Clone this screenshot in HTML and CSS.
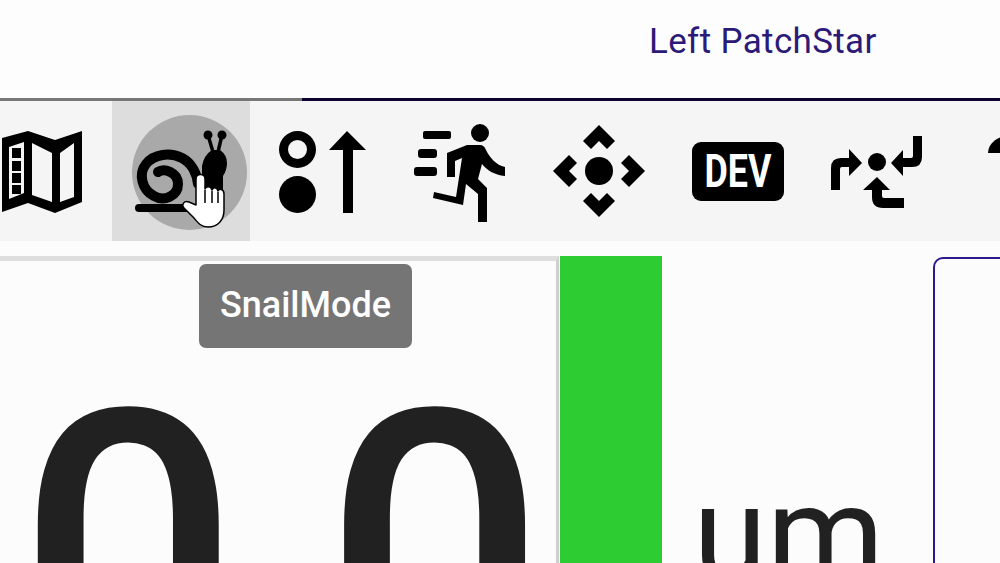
FILE: index.html
```html
<!DOCTYPE html>
<html lang="en">
<head>
    <meta charset="UTF-8">
    <title>Left PatchStar</title>
    <link rel="stylesheet" href="styles.css">
</head>
<body>
    <header class="tabs">
        <div class="tab-spacer"></div>
        <div class="tab-active">Left PatchStar</div>
    </header>

    <nav class="toolbar">
        <button class="tool tool-map" title="Map">
            <svg width="84" height="86" viewBox="0 0 84 86">
                <path fill-rule="evenodd" d="M2 8 L28 1 L55 10 L82 1 V72 L55 83 L28 73 L2 82 Z M9 17 V69 L24 63 V12 Z M32 13 V65 L52 72 V23 Z M60 23 V72 L74 67 V13 Z"/>
                <path d="M12 18h9v10h-9zM12 31h9v10h-9zM12 43h9v10h-9zM12 55h9v9h-9z"/>
            </svg>
        </button>
        <button class="tool tool-snail" title="SnailMode">
            <span class="snail-circle"></span>
            <svg class="snail" width="100" height="90" viewBox="0 0 100 90">
                <path d="M3 78 Q3 74 7 74 H72 V82 H7 Q3 82 3 78 Z"/>
                <path fill="none" stroke="#000" stroke-width="10" stroke-linecap="round" d="M26 42 C32 38 46 42 46 54 C46 66 32 72 22 66 C10 60 6 44 14 34 C22 24 38 22 50 28 C60 33 65 44 66 54"/>
                <path d="M80 20 H88 Q95 25 95 33 Q95 40 91 46 V72 H70 V36 Q72 25 80 20 Z"/>
                <path fill="none" stroke="#000" stroke-width="3.5" d="M81 22 L76 5 M86 22 L90 5"/>
                <circle cx="76" cy="5" r="4.5"/>
                <circle cx="90" cy="5" r="4.5"/>
            </svg>
            <svg class="hand" width="46" height="57" viewBox="0 0 46 57">
                <path fill="#fff" stroke="#000" stroke-width="1.5" stroke-linejoin="round" d="M16 33 V7 C16 1 25 1 25 7 V17 C26 14 31 14 32 18 C33 15 37 15 38 19 C39 16 44 17 44 22 V38 C44 48 38 55 28 55 C21 55 18 51 14 46 L4 36 C1 33 4 28 9 30 Z"/>
                <path stroke="#000" stroke-width="1.5" d="M25 18 V31 M32 19 V31 M38 20 V31"/>
            </svg>
        </button>
        <button class="tool tool-step" title="Step">
            <svg width="88" height="83" viewBox="0 0 88 83">
                <path fill-rule="evenodd" d="M18.5 0 A18.5 18.5 0 1 1 18.5 37 A18.5 18.5 0 1 1 18.5 0 Z M18.5 9 A9.5 9.5 0 1 0 18.5 28 A9.5 9.5 0 1 0 18.5 9 Z"/>
                <circle cx="18.5" cy="63.5" r="18.5"/>
                <path d="M68 0 L87 19 H74 V82 H64 V19 H50 Z"/>
            </svg>
        </button>
        <button class="tool tool-run" title="Run">
            <svg width="92" height="98" viewBox="0 0 92 98">
                <circle cx="66" cy="9" r="9"/>
                <path d="M33 29 L53 21 H66 Q70 21 72 26 C76 34 82 41 91 43 V52 C80 51 73 46 68 40 L64 55 L73 64 V98 H64 V70 L52 60 L49 81 L19 74 L20 68 L42 73 L48 34 L41 37 V53 H33 Z"/>
                <rect x="9" y="7" width="28" height="8" rx="2"/>
                <rect x="4" y="25" width="19" height="9" rx="3"/>
                <rect x="0" y="43" width="23" height="9" rx="3"/>
            </svg>
        </button>
        <button class="tool tool-move" title="Move">
            <svg width="92" height="92" viewBox="0 0 92 92">
                <circle cx="46" cy="46" r="14"/>
                <path d="M46 0 L62 16 L54 24 L46 16 L38 24 L30 16 Z"/>
                <path d="M46 92 L30 76 L38 68 L46 76 L54 68 L62 76 Z"/>
                <path d="M0 46 L16 30 L24 38 L16 46 L24 54 L16 62 Z"/>
                <path d="M92 46 L76 62 L68 54 L76 46 L68 38 L76 30 Z"/>
            </svg>
        </button>
        <div class="tool tool-dev" title="Dev"><span class="dev-badge"><span class="dev-text">DEV</span></span></div>
        <button class="tool tool-center" title="Center">
            <svg width="92" height="74" viewBox="0 0 92 74">
                <circle cx="46" cy="26" r="9"/>
                <path d="M0 54 V32 Q0 22 10 22 H18 V13 L31 27 L18 40 V31 H11 Q9 31 9 33 V54 Z"/>
                <path d="M91 0 V21 Q91 31 81 31 H72 V40 L60 27 L72 14 V22 H80 Q82 22 82 20 V0 Z"/>
                <path d="M46 41 L59 54 H51 V60 Q51 62 53 62 H73 V72 H52 Q41 72 41 61 V54 H32 Z"/>
            </svg>
        </button>
        <span class="tool-cut"></span>
    </nav>

    <main class="content">
        <section class="position-panel">
            <div class="readout">0.0</div>
            <div class="tooltip">SnailMode</div>
        </section>
        <div class="level-bar"></div>
        <div class="unit">um</div>
        <div class="side-box"></div>
    </main>
</body>
</html>
```

FILE: styles.css
```css
html, body { margin: 0; padding: 0; }
body { width: 1000px; height: 563px; overflow: hidden; background-color: #fcfcfc; font-family: Roboto, sans-serif; color: #212121; }
button { background: none; border: none; padding: 0; margin: 0; }
svg { display: block; }

.tabs { display: flex; height: 101px; background-color: #fdfdfd; }
.tab-spacer { flex: none; width: 302px; box-sizing: border-box; border-bottom: 3px solid #777; }
.tab-active { flex: 1; box-sizing: border-box; border-bottom: 3px solid #0e0330; padding: 22px 0 0 347px; font-size: 35px; line-height: 40px; letter-spacing: 0.35px; color: #2b1a78; white-space: nowrap; }

.toolbar { display: flex; align-items: center; height: 140px; background-color: #f5f5f5; overflow: hidden; }
.tool { flex: none; display: flex; align-items: center; justify-content: center; height: 140px; }
.tool-map { width: 84px; margin-right: 28px; padding-top: 4px; box-sizing: border-box; }
.tool-snail { position: relative; width: 138px; background-color: #dddddd; }
.snail-circle { position: absolute; left: 20px; top: 14px; width: 115px; height: 115px; border-radius: 50%; background-color: #a9a9a9; }
.snail { position: absolute; left: 20px; top: 29px; }
.hand { position: absolute; left: 68px; top: 71px; }
.tool-step { width: 88px; margin-left: 29px; padding-top: 3px; box-sizing: border-box; }
.tool-run { width: 92px; margin-left: 47px; padding-top: 4px; box-sizing: border-box; }
.tool-move { width: 92px; margin-left: 47px; }
.tool-dev { width: 92px; margin-left: 47px; }
.dev-badge { display: flex; align-items: center; justify-content: center; width: 92px; height: 59px; border-radius: 9px; background-color: #000; }
.dev-text { display: block; color: #fff; font-size: 46px; line-height: 46px; font-weight: 700; transform: scaleX(0.78); }
.tool-center { width: 92px; margin-left: 47px; padding-top: 4px; box-sizing: border-box; }
.tool-cut { flex: none; width: 24px; height: 18px; margin: -54px 0 0 65px; border-radius: 100% 0 0 0; background-color: #000; }

.content { display: flex; align-items: flex-start; height: 322px; padding-top: 15px; overflow: hidden; box-sizing: border-box; }
.position-panel { position: relative; flex: none; width: 559px; height: 307px; box-sizing: border-box; border-top: 5px solid #dedede; border-right: 3px solid #cfcfcf; }
.readout { font-size: 388px; line-height: 388px; font-weight: 500; letter-spacing: -11px; margin: 99px 0 0 18px; white-space: nowrap; color: #212121; }
.tooltip { position: absolute; left: 199px; top: 3px; width: 213px; height: 84px; border-radius: 7px; background-color: #757575; color: #fff; font-size: 36px; font-weight: 500; line-height: 82px; text-align: center; }
.level-bar { flex: none; width: 102px; height: 307px; margin-left: 1px; background-color: #2ecc33; }
.unit { flex: none; width: 271px; font-size: 134px; line-height: 134px; margin-top: 212px; padding-left: 31px; box-sizing: border-box; color: #212121; }
.side-box { flex: none; width: 120px; height: 400px; margin-top: 1px; box-sizing: border-box; border: 2px solid #2b1a8c; border-radius: 10px; }
```
